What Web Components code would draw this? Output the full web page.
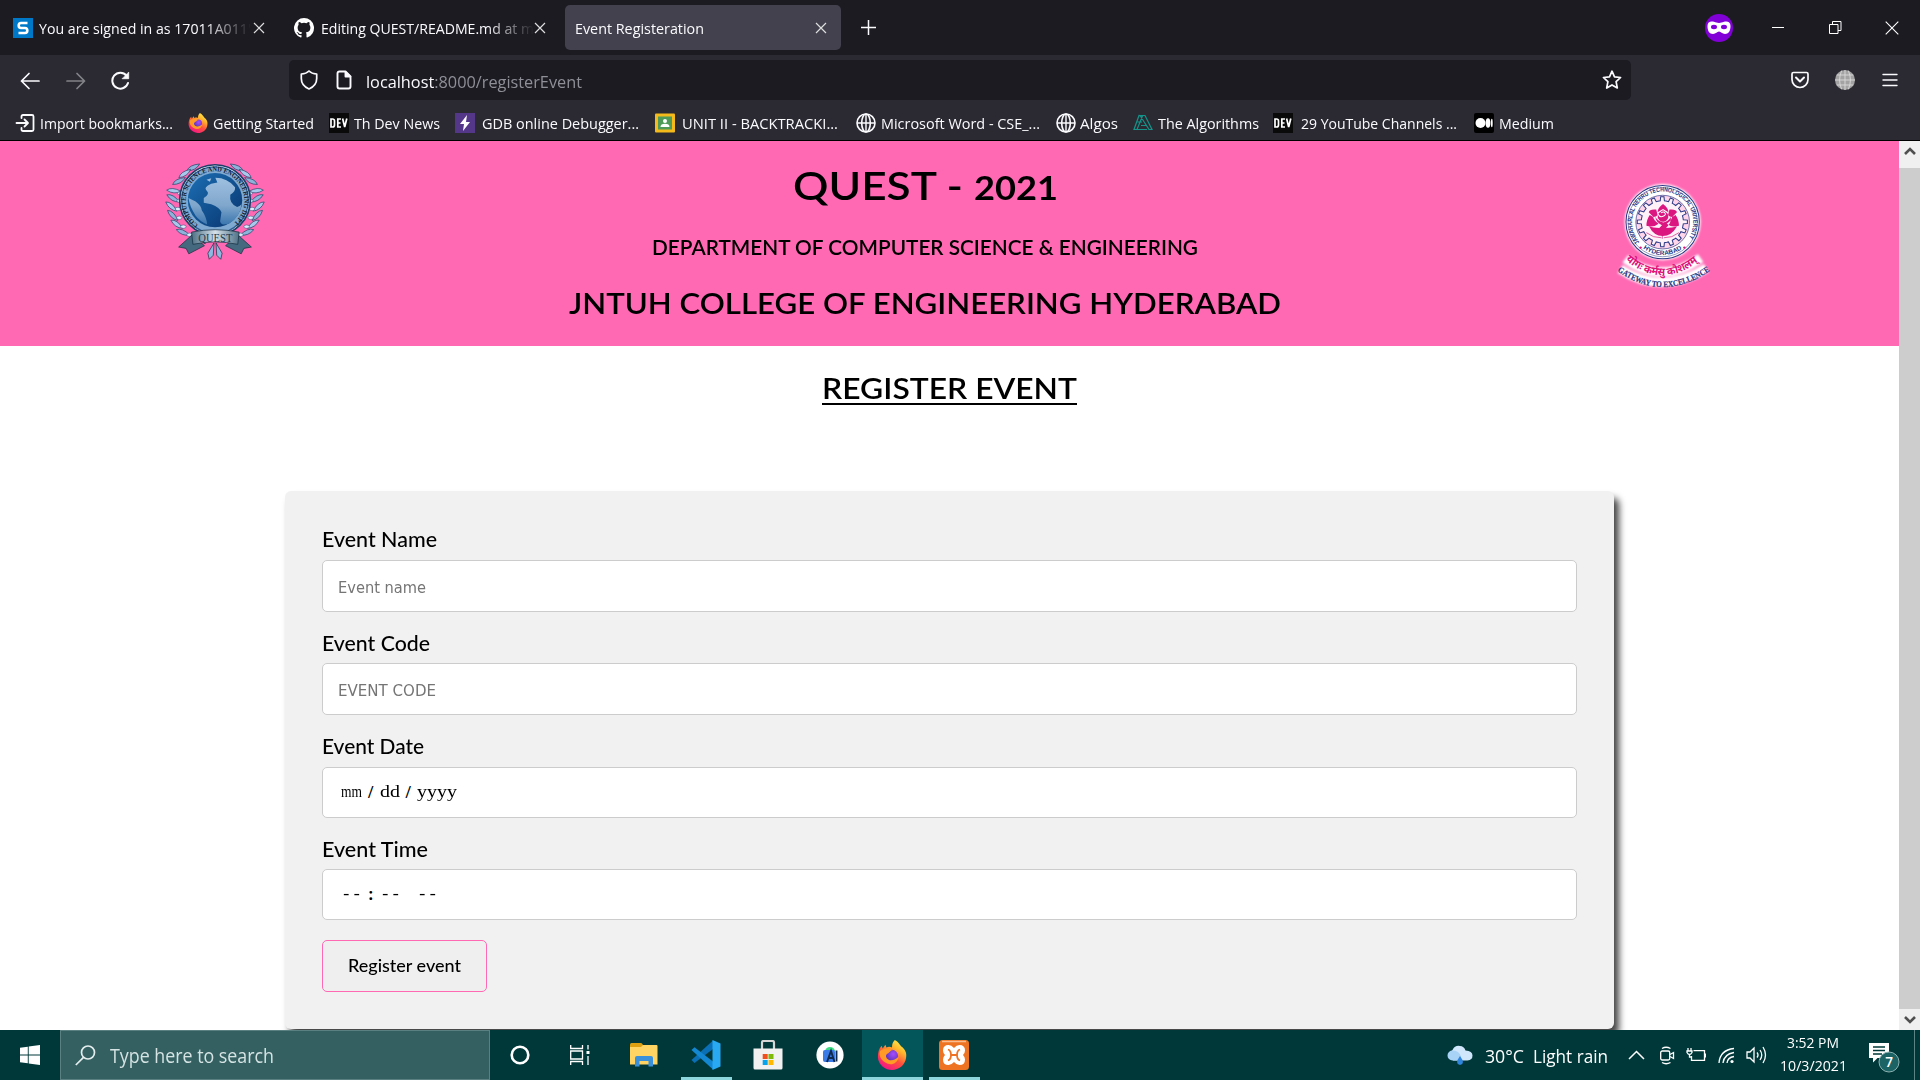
<!DOCTYPE html>
<html lang="en">
<head>
<meta charset="utf-8">
<title>Event Registeration</title>
<style>
html,body{margin:0;height:100%;overflow:hidden;background:#fff}
body{font-family:"Open Sans","Noto Sans",sans-serif}
</style>
</head>
<body>
<desktop-screen></desktop-screen>
<script>
const make=(name,html)=>customElements.define(name,class extends HTMLElement{
  constructor(){super();this.attachShadow({mode:'open'}).innerHTML=html;}
});

const FIREFOX=`<svg viewBox="0 0 32 32" width="100%" height="100%"><defs>
<linearGradient id="a" x1=".85" y1="0" x2=".25" y2="1"><stop offset="0" stop-color="#fff44f"/><stop offset=".3" stop-color="#ffb62d"/><stop offset=".6" stop-color="#ff4f3d"/><stop offset="1" stop-color="#f0138a"/></linearGradient>
<radialGradient id="b" cx=".6" cy=".35" r=".7"><stop offset="0" stop-color="#a64bff"/><stop offset="1" stop-color="#5333b0"/></radialGradient></defs>
<path fill="url(#a)" d="M19 0c4 2 5 5 7 7 4 3 6 7 5 12-1 8-8 13-15 13S1 26 1 18c0-5 1-9 4-12l1 3 3-4 1 3c2-1 4-1 6 0 0-4 1-6 3-8z"/>
<circle cx="16" cy="17" r="6.500" fill="url(#b)"/>
<path fill="#ff9a26" d="M3 12c3-3 9-4 14-1-3 0-3 2-5 3-3 1-3 4-1 6 4 4 9 0 12-2-1 7-8 10-14 6C4 21 2 17 3 12z"/></svg>`;

make('window-tab',`<style>
:host{display:flex;align-items:center;box-sizing:border-box;height:45px;border-radius:5px;color:#fbfbfe;font-size:14.6px}
.icon{display:flex;flex:none}
.label{flex:none;overflow:hidden;position:relative}
:host([fade]) .label{-webkit-mask-image:linear-gradient(90deg,#000 78%,transparent 100%)}
.x{margin-left:auto;display:flex;flex:none}
</style><span class="icon"><slot name="icon"></slot></span><span class="label"><slot></slot></span>
<svg class="x" width="12" height="12" viewBox="0 0 12 12"><path d="M1 1l10 10M11 1L1 11" stroke="#dededf" stroke-width="1.2" fill="none"/></svg>`);

make('tab-strip',`<style>
:host{display:flex;height:55px;background:#1c1b22;align-items:center}
.r{margin-left:auto;display:flex;align-items:center;padding-right:21px}
svg{display:block}
</style>
<window-tab fade style="width:272px;padding:0 7px 0 13px">
<svg slot="icon" width="26" height="20"><rect width="20" height="20" fill="#0078c8"/><path d="M14.5 5H8Q5.700 5 5.700 7.500T8 10h4q2.300 0 2.300 2.500T12 15H5.500" fill="none" stroke="#fff" stroke-width="2.600"/></svg>
<fit-text w="212">You are signed in as 17011A011'</fit-text></window-tab>
<window-tab fade style="width:293px;padding:0 19px 0 22px">
<svg slot="icon" width="27" height="20" viewBox="0 0 21.600 16"><path fill="#fff" d="M8 0a8 8 0 00-2.530 15.590c.4.070.55-.17.55-.38v-1.490c-2.230.48-2.700-.95-2.700-.95-.36-.92-.89-1.170-.89-1.170-.73-.5.050-.49.050-.49.800.06 1.230.83 1.230.83.72 1.220 1.870.87 2.330.66.070-.52.280-.87.510-1.070-1.780-.2-3.640-.89-3.640-3.950 0-.87.310-1.590.82-2.150-.08-.2-.36-1.020.08-2.120 0 0 .67-.21 2.200.82a7.600 7.600 0 014 0c1.530-1.040 2.200-.82 2.200-.82.44 1.100.16 1.920.08 2.120.51.56.82 1.270.82 2.150 0 3.070-1.870 3.750-3.650 3.950.29.25.54.73.54 1.480v2.200c0 .21.15.46.55.38A8 8 0 008 0z"/></svg>
<fit-text w="213">Editing QUEST/README.md at m</fit-text></window-tab>
<window-tab style="width:276px;padding:0 14px 0 10px;background:#42414d"><fit-text w="129">Event Registeration</fit-text></window-tab>
<svg style="margin-left:19px" width="17" height="17"><path d="M8.500 1v15M1 8.500h15" stroke="#fbfbfe" stroke-width="1.500"/></svg>
<div class="r">
<svg width="28" height="28"><circle cx="14" cy="14" r="14" fill="#8000d7"/><path fill="#fff" d="M2.500 12c0-4 3-5.200 6.500-4.200 2 .5 3 1.200 5 1.200s3-.7 5-1.200c3.500-1 6.500.2 6.500 4.200 0 5-2 8-5.500 8-3 0-4-2.500-6-2.500S11 20 8 20c-3.500 0-5.500-3-5.500-8z"/><ellipse cx="9" cy="13" rx="3" ry="2.200" fill="#8000d7"/><ellipse cx="19" cy="13" rx="3" ry="2.200" fill="#8000d7"/></svg>
<svg style="margin-left:39px" width="12" height="14"><path d="M0 6.500h12" stroke="#fff"/></svg>
<svg style="margin-left:45px" width="13" height="13"><path d="M.5 3.500h8.500v9H.5zM3.500 3.500V.5H12v9H9" fill="none" stroke="#fff"/></svg>
<svg style="margin-left:43px" width="14" height="14"><path d="M.7.700l12.600 12.600M13.300.700L.7 13.300" stroke="#fff" stroke-width="1.100"/></svg>
</div>`);

make('nav-bar',`<style>
:host{display:flex;height:50px;align-items:center;background:#2b2a33;padding:0 22px 0 20px;box-sizing:border-box}
svg{display:block;flex:none;fill:none;stroke:#fbfbfe;stroke-width:1.700;stroke-linecap:round;stroke-linejoin:round}
.url{display:flex;align-items:center;box-sizing:border-box;width:1342px;height:40px;border-radius:5px;background:#1c1b22;margin-left:159px;padding:0 9px 0 11px;font-size:17px;color:#fbfbfe}
.g{color:#8f8f98}
</style>
<svg style="margin-top:1px" width="20" height="18"><path d="M19 9H1.500M9 1.500L1.500 9 9 16.500"/></svg>
<svg style="margin:1px 0 0 26px;opacity:.42" width="20" height="18"><path d="M1 9h17.500M11 1.500L18.500 9 11 16.500"/></svg>
<svg style="margin:2px 0 0 25px" width="19" height="20"><path d="M15.500 4.500A8 8 0 1017 12" stroke-width="2"/><path d="M17.700 1.500v6.200h-6.200z" fill="#fbfbfe" stroke-width=".8"/></svg>
<div class="url">
<svg width="18" height="20"><path d="M9 1C7 3 4 3.800 1.300 4v4.500C1.300 13 4.500 17 9 19c4.500-2 7.700-6 7.700-10.500V4C14 3.800 11 3 9 1z"/></svg>
<svg style="margin-left:18px" width="16" height="20"><path stroke-width="1.900" d="M9.500 1.500H3.500q-2 0-2 2v13q0 2 2 2h9q2 0 2-2v-10zv5h5"/><path d="M9.500 1.500v5h5z" fill="#fbfbfe" stroke-width="1"/></svg>
<fit-text w="216" style="margin:3px 0 0 14px">localhost<span class="g">:8000/registerEvent</span></fit-text>
<svg style="margin-left:auto" width="20" height="20"><path d="M10 1.200l2.500 5.600 6.100.7-4.500 4.200 1.200 6.300-5.300-3.100L4.700 18l1.200-6.300L1.400 7.500l6.100-.7z"/></svg>
</div>
<svg style="margin-left:160px" width="18" height="18"><path d="M2.500 1.500h13q1.500 0 1.500 1.500v5.500a8 8 0 01-16 0V3q0-1.500 1.500-1.500z"/><path d="M5 6.500l4 4 4-4" stroke-width="2"/></svg>
<svg style="margin-left:26px" width="20" height="20"><circle cx="10" cy="10" r="10" fill="#a3a3a3" stroke="none"/><path stroke="#dadada" stroke-width=".9" d="M10 0v20M0 10h20M2 5h16M2 15h16M6.500 1Q2.500 10 6.500 19M13.500 1q4 9 0 18"/></svg>
<svg style="margin-left:auto" width="16" height="14"><path stroke-width="1.400" d="M1 1.500h14M1 7h14M1 12.500h14"/></svg>`);

make('book-mark',`<style>:host{display:flex;align-items:center}.i{display:flex;width:20px;height:20px;flex:none;margin-right:var(--g,5px)}
::slotted(svg){display:block}</style><span class="i"><slot name="icon"></slot></span><slot></slot>`);

const dev='<svg slot="icon" width="20" height="20"><rect width="20" height="20" fill="#0a0a0a"/><g fill="none" stroke="#fff" stroke-width="1.700"><path d="M2 6v8h1.500q2 0 2-2V8q0-2-2-2zM12 6H8.800v8H12M8.800 10h2.700M13.600 5.500l2.100 8.500 2.100-8.500"/></g></svg>';
const globe='<svg slot="icon" width="20" height="20" fill="none" stroke="#fbfbfe" stroke-width="1.600"><circle cx="10" cy="10" r="9"/><ellipse cx="10" cy="10" rx="4.300" ry="9"/><path d="M1 10h18M10 1v18" stroke-width="1.400"/></svg>';
make('bookmark-bar',`<style>
:host{display:flex;height:36px;align-items:center;background:#2b2a33;border-bottom:1px solid #000;box-sizing:border-box;padding:1px 0 0 15px;color:#fbfbfe;font-size:14.600px}
book-mark+book-mark{margin-left:var(--m,15px)}
</style>
<book-mark><svg slot="icon" width="20" height="20" fill="none" stroke="#fbfbfe" stroke-width="1.800" stroke-linecap="round" stroke-linejoin="round"><path d="M6.500 5V3.500q0-1.500 1.500-1.500h9q1.500 0 1.500 1.500v13q0 1.500-1.500 1.500H8q-1.500 0-1.500-1.500V15M1.500 10h11M9.500 6.500l3.500 3.500-3.500 3.500"/></svg><fit-text w="133">Import bookmarks...</fit-text></book-mark>
<book-mark><span slot="icon" style="display:block;width:20px;height:20px">${FIREFOX}</span><fit-text w="101">Getting Started</fit-text></book-mark>
<book-mark>${dev}<fit-text w="86">Th Dev News</fit-text></book-mark>
<book-mark style="--g:7px;--m:15px"><svg slot="icon" width="20" height="20"><rect width="20" height="20" fill="#55378a"/><path d="M12 2L5 11h4l-1 7 7-9h-4z" fill="#fff"/></svg><fit-text w="157">GDB online Debugger...</fit-text></book-mark>
<book-mark style="--g:7px;--m:16px"><svg slot="icon" width="20" height="20"><rect width="20" height="19" y=".5" rx="1" fill="#f4b91a"/><rect x="3" y="3.500" width="14" height="13" fill="#4f9a57"/><circle cx="10" cy="8" r="2" fill="#fff"/><path d="M5.500 14q0-3.300 4.500-3.300t4.500 3.300z" fill="#fff"/></svg><fit-text w="156">UNIT II - BACKTRACKI...</fit-text></book-mark>
<book-mark style="--m:18px;--g:5px">${globe}<fit-text w="159">Microsoft Word - CSE_...</fit-text></book-mark>
<book-mark style="--m:16px;--g:4px">${globe}<fit-text w="38">Algos</fit-text></book-mark>
<book-mark style="--m:15px"><svg slot="icon" width="20" height="20" fill="none" stroke="#14938a" stroke-width="1.200"><path d="M6 2.500L1 16.500h3L9.500 3zM9 9H4.500M7 2.500l9 14h3L12 2.500zM8 12.500h6M2 16.500h12"/></svg><fit-text w="101">The Algorithms</fit-text></book-mark>
<book-mark style="--g:8px;--m:14px">${dev}<fit-text w="156">29 YouTube Channels ...</fit-text></book-mark>
<book-mark style="--g:5px;--m:17px"><svg slot="icon" width="20" height="20"><rect width="20" height="20" rx="2" fill="#000"/><circle cx="6.500" cy="10" r="5" fill="#fff"/><ellipse cx="14" cy="10" rx="2.400" ry="4.800" fill="#fff"/><ellipse cx="17.800" cy="10" rx=".9" ry="4.300" fill="#fff"/></svg><fit-text w="55">Medium</fit-text></book-mark>`);

/* laurel leaves mirrored about the seal axis */
const leaves=(()=>{const L=[[160,82,-38],[135,100,-45],[118,122,-38],[103,150,-5],[101,172,20],[96,196,30],[100,222,35],[112,248,25],[130,272,12]];
 return L.map(([x,y,r],i)=>`<g transform="translate(${x} ${y}) rotate(${r})"><path d="M-20 -3Q-4 -13 22 4Q0 13 -20 -3z" fill="${i%2?'#a9c9ec':'#8fb4dc'}" stroke="#26456b" stroke-width="2"/></g><ellipse cx="${x+20}" cy="${y+8}" rx="8" ry="5" fill="#dcecfb" stroke="#31547f" stroke-width="1.500"/>`).join('');})();
make('quest-seal',`<style>:host{display:block;width:102px;height:101px}svg{display:block}text{font-family:"Liberation Serif",serif;font-weight:bold}</style>
<svg width="102" height="101" viewBox="75 60 300 297"><defs>
<linearGradient id="g" x1="0" y1="0" x2="1" y2="1"><stop offset="0" stop-color="#1c6fb4"/><stop offset="1" stop-color="#08346e"/></linearGradient>
<linearGradient id="l" x1="0" y1="0" x2="0" y2="1"><stop offset="0" stop-color="#9fc0e0"/><stop offset=".6" stop-color="#7fa6cc"/><stop offset="1" stop-color="#3a76ae"/></linearGradient>
<linearGradient id="r" x1="0" x2="1"><stop offset="0" stop-color="#4f7185"/><stop offset=".5" stop-color="#d5e1ea"/><stop offset="1" stop-color="#4f7185"/></linearGradient>
<path id="p" d="M176 250A86 86 0 1 1 274 250"/></defs>
<g>${leaves}</g><g transform="translate(450 0) scale(-1 1)">${leaves}</g>
<circle cx="225" cy="178" r="104" fill="#e9f2fa" stroke="#1d3f68" stroke-width="5"/>
<circle cx="225" cy="178" r="98" fill="#7fa9d0" stroke="#2e5f93" stroke-width="4"/>
<circle cx="225" cy="178" r="80" fill="url(#g)"/>
<path fill="url(#l)" d="M192 172Q212 160 200 150Q190 140 214 130L232 126L226 112Q262 112 284 140Q286 152 270 162Q266 188 290 198Q298 196 303 190Q300 226 268 246Q244 256 240 240L244 214Q240 200 214 190L192 186zM147 172Q150 196 168 224Q180 240 202 250Q200 228 186 208Q186 196 168 182zM200 118l14-4-4 10z"/>
<text font-size="21" fill="#101c30"><textPath href="#p" textLength="428" lengthAdjust="spacingAndGlyphs">COMPUTER SCIENCE AND ENGINEERING DEPT</textPath></text>
<path d="M158 280L118 316l22 4 8 16 46-24zM292 280l40 36-22 4-8 16-46-24z" fill="#45697f" stroke="#122b3d" stroke-width="2"/>
<path d="M222 304l-18 30 4 18 12-12zM228 304l18 30-4 18-12-12z" fill="#8fb8e2" stroke="#122b3d" stroke-width="2"/>
<path d="M156 272Q225 258 296 272L292 308Q225 294 160 308z" fill="url(#r)" stroke="#122b3d" stroke-width="2"/>
<text x="176" y="300" font-size="37" textLength="100" lengthAdjust="spacingAndGlyphs" fill="#203c52" style="font-weight:normal">QUEST</text></svg>`);

const gear=(()=>{let s='';const n=16,cx=247,cy=186;for(let i=0;i<n;i++){[[0,62],[.3,62],[.38,74],[.72,74],[.8,62]].forEach(([f,r])=>{const a=(i+f-.55)/n*2*Math.PI-Math.PI/2;s+=(s?'L':'M')+(cx+r*Math.cos(a)).toFixed(1)+' '+(cy+r*Math.sin(a)).toFixed(1);});}return s+'z';})();
make('jntuh-seal',`<style>:host{display:block;width:97px;height:110px}svg{display:block;overflow:visible}text{font-weight:bold}.s{font-family:"Liberation Sans",sans-serif}.f{font-family:"Liberation Serif",serif}.d{font-family:"Noto Sans Devanagari","Noto Sans",sans-serif}</style>
<svg width="97" height="110" viewBox="105 60 285 324"><defs>
<path id="t" d="M180 246A90 90 0 1 1 316 246"/><path id="b" d="M180 255A97 97 0 0 0 318 255"/>
<path id="m" d="M139 299Q247 390 360 297"/><path id="e" d="M110 328Q249 430 394 326"/>
<filter id="w" x="-20%" y="-20%" width="140%" height="140%"><feGaussianBlur stdDeviation="3.500"/></filter></defs>
<g filter="url(#w)"><circle cx="248" cy="187" r="112" fill="#fff"/><path d="M138 295Q245 375 360 293M123 325Q245 405 377 322" stroke="#fff" stroke-width="28" fill="none"/></g>
<circle cx="248" cy="187" r="108" fill="#fff" stroke="#2b3a86" stroke-width="3"/><circle cx="248" cy="187" r="102" fill="none" stroke="#2b3a86" stroke-width="1.500"/>
<circle cx="248" cy="187" r="79" fill="#ffd5ea" stroke="#2b3a86" stroke-width="2"/>
<path d="${gear}" fill="#fff1f8" stroke="#2b3a86" stroke-width="3"/>
<g fill="#dc1680"><path d="M249 134q-16 12-16 24l16-10 16 10q0-12-16-24zM229 150q-20-2-22 8l14 14q8 0 12-6zM268 150q20-2 22 8l-14 14q-8 0-12-6zM210 166q-10 14-10 32 22 6 36-6-14-10-16-20zM286 166q10 14 10 32-22 6-36-6 14-10 16-20zM249 152q-26 14-10 30 10 8 20 0 16-16-10-30zM226 172q4 18 20 24l-8 8q-18 0-30-4 14 28 40 28t42-28q-14 4-32 4 16-14 14-32-8 14-22 16-14-2-24-16z"/><path d="M200 218q20 16 44 15M296 218q-20 16-44 15M247 222v14" stroke="#dc1680" stroke-width="2" fill="none"/></g>
<path d="M243 160q8-6 12 0t-6 10q-10 4-14-6" fill="none" stroke="#fff" stroke-width="3"/>
<text class="s" font-size="19" fill="#27357f"><textPath href="#t" textLength="395" lengthAdjust="spacingAndGlyphs">JAWAHARLAL NEHRU TECHNOLOGICAL UNIVERSITY</textPath></text>
<text class="s" font-size="19" fill="#27357f"><textPath href="#b" startOffset="14" textLength="122" lengthAdjust="spacingAndGlyphs">HYDERABAD</textPath></text>
<circle cx="183" cy="262" r="3.500" fill="#dc1680"/><circle cx="312" cy="262" r="3.500" fill="#dc1680"/>
<text class="d" font-size="32" fill="#e01078"><textPath href="#m" textLength="234" lengthAdjust="spacingAndGlyphs">योगः कर्मसु कौशलम्</textPath></text>
<text class="f" font-size="25" fill="#27357f" stroke="#27357f" stroke-width=".5"><textPath href="#e" startOffset="5" textLength="294" lengthAdjust="spacingAndGlyphs">GATEWAY TO EXCELLENCE</textPath></text></svg>`);

make('page-banner',`<style>
:host{display:flex;height:205px;box-sizing:border-box;background:#ff69b4;padding:19px 188px 0 164px;font-family:Lato,"Open Sans",sans-serif;color:#000}
.c{flex:1;display:flex;flex-direction:column;align-items:center;margin-right:30px;font-weight:600;gap:22px}
h1,h2,h3{margin:0;font-weight:600}
h1{font-size:39px;line-height:51px;height:51px}h3{font-size:21.600px;line-height:28px;height:28px}h2{font-size:29.500px;line-height:39px}
small{font-size:.82em;font-weight:700}
jntuh-seal{margin-top:19px}
</style><quest-seal></quest-seal>
<div class="c"><h1><fit-text w="265">QUEST - <small>2021</small></fit-text></h1><h3><fit-text w="546">DEPARTMENT OF COMPUTER SCIENCE &amp; ENGINEERING</fit-text></h3><h2><fit-text w="712">JNTUH COLLEGE OF ENGINEERING HYDERABAD</fit-text></h2></div>
<jntuh-seal></jntuh-seal>`);

make('form-field',`<style>
:host{display:block;margin-bottom:19px}
.l{display:block;font:500 20.500px/25px Lato,"Open Sans",sans-serif;color:#000;height:24px;margin-bottom:var(--g,9px)}
.b{display:flex;align-items:center;box-sizing:border-box;height:var(--h,52px);border:1px solid #ccc;border-radius:5px;background:#fff;padding:2px 15px 0;font:16.600px "DejaVu Sans Condensed","DejaVu Sans",sans-serif;color:#757575}
</style><label class="l"><slot name="label"></slot></label><div class="b"><slot></slot></div>`);

make('event-form',`<style>
:host{display:block;box-sizing:border-box;width:1329px;height:538px;border-radius:6px;background:#f1f1f1;box-shadow:5px 7px 7px #444;padding:36px 37px 0}
.m{display:flex;align-items:center;font:17px "Liberation Serif",serif;color:#000;height:20px;margin-top:-4px;padding-left:3px}
.m i{font:16px/20px "Open Sans",sans-serif;width:17.500px;text-align:center}
.t{font-family:"Liberation Mono",monospace;margin-top:-3px}
button{display:flex;align-items:center;justify-content:center;width:165px;height:52px;margin:20px 0 0;padding:0 0 1px;box-sizing:border-box;border:1px solid #ff69b4;border-radius:5px;background:#efefef;font:500 17px Lato,sans-serif;color:#000}
</style>
<form-field><fit-text slot="label" w="115">Event Name</fit-text><fit-text w="88">Event name</fit-text></form-field>
<form-field style="--g:8px"><fit-text slot="label" w="108">Event Code</fit-text><fit-text w="98">EVENT CODE</fit-text></form-field>
<form-field style="--h:51px"><fit-text slot="label" w="102">Event Date</fit-text><div class="m"><fit-text w="21">mm</fit-text><i>/</i><fit-text w="20">dd</fit-text><i>/</i><fit-text w="40">yyyy</fit-text></div></form-field>
<form-field style="--g:8px;--h:51px"><fit-text slot="label" w="106">Event Time</fit-text><div class="m t"><fit-text w="21">--</fit-text><i style="font-weight:bold">:</i><fit-text w="21">--</fit-text><fit-text w="21" style="margin-left:16px">--</fit-text></div></form-field>
<button><fit-text w="113">Register event</fit-text></button>`);

make('scroll-bar',`<style>
:host{display:flex;flex-direction:column;width:21px;background:#f0f0f0}
.a{height:27px;display:flex;align-items:center;justify-content:center}.t{flex:1;background:#cdcdcd}
.a:last-child{height:21px}
path{fill:none;stroke:#505050;stroke-width:2.600}
</style><div class="a"><svg width="12" height="8" style="margin-top:-8px"><path d="M1 7l5-5 5 5"/></svg></div><div class="t"></div><div class="a"><svg width="12" height="8"><path d="M1 1l5 5 5-5"/></svg></div>`);

make('web-page',`<style>
:host{display:flex;height:889px;overflow:hidden;background:#fff}
main{flex:1;display:flex;flex-direction:column;align-items:center;overflow:hidden}
page-banner{align-self:stretch;flex:none}
h2{margin:24px 0 85px;font:600 29.500px/36px Lato,sans-serif;height:36px;color:#000}
u{text-decoration-thickness:2px;text-underline-offset:4px;text-decoration-skip-ink:none}
event-form{flex:none}
</style><main><page-banner></page-banner><h2><fit-text w="255"><u>REGISTER EVENT</u></fit-text></h2><event-form></event-form></main><scroll-bar></scroll-bar>`);

make('task-item',`<style>:host{display:flex;flex:none;height:50px;align-items:center;justify-content:center;box-sizing:border-box}
:host([open]){border-bottom:3px solid #8ed6de;padding-top:3px}:host([active]){background:#03575a}</style><slot></slot>`);

make('task-bar',`<style>
:host{display:flex;height:50px;background:#003839;align-items:center;color:#fff}
svg{display:block;flex:none}
.s{display:flex;align-items:center;box-sizing:border-box;width:430px;height:50px;background:#346062;border:1px solid #5b8082;padding-left:14px;font-size:19.400px;color:#d5e3e3}
.tray{margin-left:auto;display:flex;align-items:center;height:50px;font-size:17.600px}
.clock{display:flex;flex-direction:column;align-items:center;font-size:15px;line-height:22.500px;width:68px;margin-left:12px;margin-top:-3px}
.ln{fill:none;stroke:#fff;stroke-width:1.300}
</style>
<task-item style="width:60px"><svg width="20" height="20" fill="#fff"><path d="M0 2.800l7.800-1v7.700H0zM8.700 1.600L20 0v9.500H8.700zM0 10.500h7.800v7.700l-7.800-1zM8.700 10.500H20V20L8.700 18.400z"/></svg></task-item>
<div class="s"><svg class="ln" width="21" height="21" style="stroke-width:1.700;stroke:#e4eeee"><circle cx="13" cy="7.500" r="6.500"/><path d="M8.500 12.300L.8 20"/></svg><fit-text w="164" style="margin-left:14px">Type here to search</fit-text></div>
<task-item style="width:60px"><svg width="20" height="20"><circle cx="10" cy="10" r="8.300" fill="none" stroke="#fff" stroke-width="2.600"/></svg></task-item>
<task-item style="width:60px"><svg class="ln" width="20" height="20"><path d="M.7 0v3.500h11.800V0M.7 20v-3.500h11.800V20M.7 6h11.800v8H.7zM18 0v4.500M18 11v9"/><path d="M16.500 6h3v3h-3z" fill="#fff" stroke="none"/></svg></task-item>
<task-item style="width:67px"><svg width="28" height="24"><path d="M0 1.500Q0 0 1.500 0H11q1 0 2 2v3H0z" fill="#dca011"/><path d="M0 4h11l2-2h13.500q1 0 1 1v18.500H0z" fill="#ffd463"/><path d="M5 23.500V15q0-2 2-2h14q2 0 2 2v8.500h-4.500V18h-9v5.500z" fill="#3a91da"/></svg></task-item>
<task-item open style="width:51px;margin-left:4px"><svg width="30" height="30" style="margin-left:-1px"><path d="M.5 20L3.500 23 22 9V.5z" fill="#0a6fb5"/><path d="M.5 10l3-2.800L22 21.500v8z" fill="#1487d2"/><path d="M21.500 0L29.500 3.500v23L21.500 30z" fill="#29a9f2"/></svg></task-item>
<task-item style="width:71px"><svg width="30" height="30"><path d="M9 9V2.500Q9 1 10.500 1h9Q21 1 21 2.500V9" fill="none" stroke="#d6d6d6" stroke-width="2.200"/><path d="M.5 8.500h29V28q0 1.500-1.500 1.500H2Q.5 29.500.5 28z" fill="#f1f1f1"/><path fill="#f0501f" d="M9.700 14h5v5h-5z"/><path fill="#80ba09" d="M15.500 14h5v5h-5z"/><path fill="#05a4ef" d="M9.700 20h5v5h-5z"/><path fill="#ffb903" d="M15.500 20h5v5h-5z"/></svg></task-item>
<task-item style="width:54px"><svg width="28" height="28"><circle cx="14" cy="14" r="13.600" fill="#fff"/><path d="M9 10Q10 6 14 6t5 4z" fill="#3ddc84"/><rect x="7" y="9" width="12" height="12" rx="2" fill="#3a7be8"/><path d="M11 21l4-11 3.500 11M12.500 17h5M20.500 9.500v11" fill="none" stroke="#102a4c" stroke-width="1.900"/></svg></task-item>
<task-item open active style="width:61px;margin-left:5px"><span style="display:block;width:30px;height:30px;margin-left:-2px">${FIREFOX}</span></task-item>
<task-item open style="width:51px;margin-left:6px"><svg width="30" height="30" style="margin-left:-1px"><rect width="30" height="30" rx="3.500" fill="#ee7423"/><path d="M3 1.500h24" stroke="#f9bd90" stroke-width="1.500"/><path d="M4 10.500Q4 5 9.500 5q3 0 5.500 3 2.500-3 5.500-3Q26 5 26 10.500q0 2.500-2 4.500 2 2 2 4.500 0 5.500-5.500 5.500-3 0-5.500-3-2.500 3-5.500 3Q4 25 4 19.500 4 17 6 15q-2-2-2-4.500z" fill="#fff"/><path d="M9 9.500q3 1 3 5.500t-3 5.500M21 9.500q-3 1-3 5.500t3 5.500M12 15h6" fill="none" stroke="#ee7423" stroke-width="1.800"/></svg></task-item>
<div class="tray">
<svg width="26" height="22" viewBox="0 0 26 22" style="margin-top:2px"><path d="M6 15a6 6 0 01-.5-10Q8 0 13 1q4 0 5.500 4.500 7 .5 7 5t-5 5H6z" fill="#cfe6fb"/><path d="M5.500 15.500a5 5 0 010-10q6 0 8 5 2 4-3 5z" fill="#a9d2f7"/><path d="M13 11q6 8 0 9-6-1 0-9z" fill="#3085dc"/></svg>
<fit-text w="39" style="margin-left:12px;margin-top:1px">30°C</fit-text><fit-text w="75" style="margin-left:9px;margin-top:1px">Light rain</fit-text>
<svg class="ln" width="17" height="10" style="margin-left:20px;stroke-width:1.500"><path d="M1 9l7.500-7.500L16 9"/></svg>
<svg class="ln" width="15" height="19" style="margin-left:15px"><rect x=".7" y="5" width="9" height="9" rx="1.500"/><path d="M10 8.500l3.500-2v6l-3.500-2M2 2.500q4-2.500 8.500 0M2 16.500q4 2.500 8.500 0"/></svg>
<svg class="ln" width="20" height="14" style="margin-left:11px"><path d="M7.500 2.700H18.500v9.600H5.500V8M19.500 5.500v4M2 0v3M5 0v3M1 3h5v1.500q-1 2-2.500 2T1 4.500zM3.500 6.500v2.500h2"/></svg>
<svg class="ln" width="17" height="17" style="margin-left:12px"><path d="M1 16Q2 3 16 1.500M5 16Q6 7 16 5.500M9 16q.5-5.500 7-6.500" /><circle cx="14" cy="14.500" r="1.600" fill="#fff" stroke="none"/></svg>
<svg class="ln" width="21" height="18" style="margin-left:11px"><path d="M1 6h3l4-4v14l-4-4H1zM11 6.500q2 2.500 0 5M14 4q3.500 5 0 10M17 1q5 8 0 16"/></svg>
<div class="clock"><fit-text w="52">3:52 PM</fit-text><fit-text w="67">10/3/2021</fit-text></div>
<svg width="33" height="32" style="margin:6px 0 0 22px"><path d="M0 1h20v15H8.500L4 20.500V16H0z" fill="#fff"/><path d="M4 5h12M4 8.500h12M4 12h9" stroke="#003839" stroke-width="1.300"/><circle cx="20" cy="20" r="10" fill="#1b6365" stroke="#8db2b2" stroke-width="1"/><text x="20" y="24.500" text-anchor="middle" font-size="13.500" font-weight="600" fill="#fff">7</text></svg>
<svg width="2" height="50" style="margin:0 4px 0 12px"><path d="M.5 0v50" stroke="#5d8485"/></svg>
</div>`);

make('desktop-screen',`<style>:host{display:flex;flex-direction:column;width:1920px;height:1080px;overflow:hidden}</style>
<tab-strip></tab-strip><nav-bar></nav-bar><bookmark-bar></bookmark-bar><web-page></web-page><task-bar></task-bar>`);

/* A single line of text condensed or stretched to a given width. */
customElements.define('fit-text',class extends HTMLElement{
  constructor(){super();this.attachShadow({mode:'open'}).innerHTML='<style>:host{display:block;flex:none;white-space:nowrap;text-align:left}span{display:inline-block;transform-origin:0 50%}</style><span><slot></slot></span>';}
  connectedCallback(){
    const w=+this.getAttribute('w'),s=this.shadowRoot.querySelector('span');
    const n=s.getBoundingClientRect().width;
    this.style.width=w+'px';
    if(n)s.style.transform='scaleX('+(w/n)+')';
  }
});
</script>
</body>
</html>
